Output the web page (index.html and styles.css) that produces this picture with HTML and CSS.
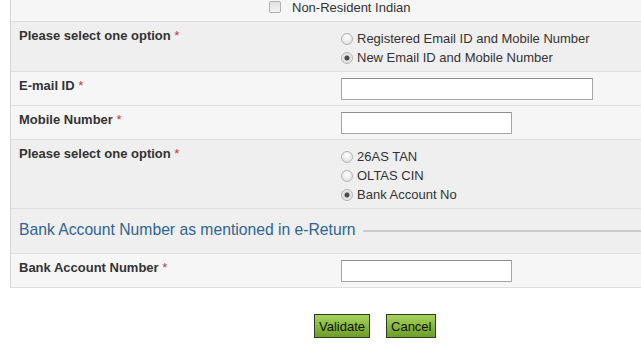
FILE: index.html
```html
<!DOCTYPE html>
<html lang="en">
<head>
    <meta charset="UTF-8">
    <title>Validate Bank Account</title>
    <link rel="stylesheet" href="styles.css">
</head>
<body>
    <div class="form">
        <!-- residency -->
        <div class="row row-top">
            <label class="check"><input type="checkbox"> Non-Resident Indian</label>
        </div>

        <div class="row dark">
            <div class="label">Please select one option <span class="req">*</span></div>
            <div class="field options">
                <label><input type="radio" name="contact"> Registered Email ID and Mobile Number</label>
                <label><input type="radio" name="contact" checked> New Email ID and Mobile Number</label>
            </div>
        </div>

        <div class="row">
            <div class="label">E-mail ID <span class="req">*</span></div>
            <div class="field"><input type="text" class="text wide"></div>
        </div>

        <div class="row">
            <div class="label">Mobile Number <span class="req">*</span></div>
            <div class="field"><input type="text" class="text"></div>
        </div>

        <div class="row dark">
            <div class="label">Please select one option <span class="req">*</span></div>
            <div class="field options">
                <label><input type="radio" name="mode"> 26AS TAN</label>
                <label><input type="radio" name="mode"> OLTAS CIN</label>
                <label><input type="radio" name="mode" checked> Bank Account No</label>
            </div>
        </div>

        <!-- section heading -->
        <div class="row dark legend-row">
            <span class="legend">Bank Account Number as mentioned in e-Return</span>
            <span class="legend-line"></span>
        </div>

        <div class="row">
            <div class="label">Bank Account Number <span class="req">*</span></div>
            <div class="field"><input type="text" class="text"></div>
        </div>
    </div>

    <div class="actions">
        <button class="btn">Validate</button>
        <button class="btn">Cancel</button>
    </div>
</body>
</html>
```

FILE: styles.css
```css
body {
    margin: 0;
    background-color: #ffffff;
    font-family: "Liberation Sans", Arial, sans-serif;
    font-size: 13px;
    color: #333333;
    overflow: hidden;
}

.form {
    margin-left: 10px;
    border-left: 1px solid #d6d6d6;
}

.row {
    display: flex;
    background-color: #f6f6f6;
    border-bottom: 1px solid #dedede;
}

.row.dark {
    background-color: #efefef;
}

.row-top {
    height: 21px;
    padding-left: 258px;
}

.check {
    display: flex;
    align-items: flex-start;
    line-height: 15px;
}

.label {
    width: 322px;
    padding: 6px 0 0 8px;
    line-height: 15px;
    font-weight: bold;
    color: #333333;
}

.req {
    color: #c0394a;
    font-weight: normal;
}

.field {
    padding: 6px 0 5px;
}

.options {
    display: flex;
    flex-direction: column;
    padding: 7px 0 4px;
}

.options label {
    display: flex;
    align-items: center;
    height: 19px;
}

input[type="radio"] {
    appearance: none;
    width: 12px;
    height: 12px;
    margin: 0 4px 0 0;
    border: 1px solid #b4b4b4;
    border-radius: 50%;
    background: radial-gradient(circle at 50% 35%, #ffffff 0%, #e8e8e8 60%, #d2d2d2 100%);
}

input[type="radio"]:checked {
    background: radial-gradient(circle, #4a4a4a 0, #4a4a4a 2px, #e2e2e2 3px, #eeeeee 100%);
}

input[type="checkbox"] {
    appearance: none;
    width: 12px;
    height: 12px;
    margin: 1px 11px 0 0;
    border: 1px solid #b0b0b0;
    border-radius: 2px;
    background: linear-gradient(#e2e2e2, #f4f4f4);
}

.text {
    box-sizing: border-box;
    width: 171px;
    height: 22px;
    margin: 0;
    border: 1px solid #a6a6a6;
    border-top-color: #8e8e8e;
    background-color: #ffffff;
}

.text.wide {
    width: 252px;
}

.legend-row {
    height: 44px;
    align-items: center;
    padding-left: 8px;
}

.legend {
    font-size: 15.7px;
    color: #2e6592;
    margin-top: -3px;
}

.legend-line {
    flex: 1;
    height: 2px;
    margin: 0 0 0 7px;
    background-color: #cccccc;
}

.actions {
    display: flex;
    gap: 16px;
    padding: 26px 0 0 314px;
}

.btn {
    height: 24px;
    padding: 0 4px;
    font-family: "Liberation Sans", Arial, sans-serif;
    font-size: 13px;
    color: #111111;
    border: 1px solid #2f3a22;
    background: linear-gradient(#a9d35e, #86b63e 55%, #6e9c2c);
    cursor: pointer;
}
```
